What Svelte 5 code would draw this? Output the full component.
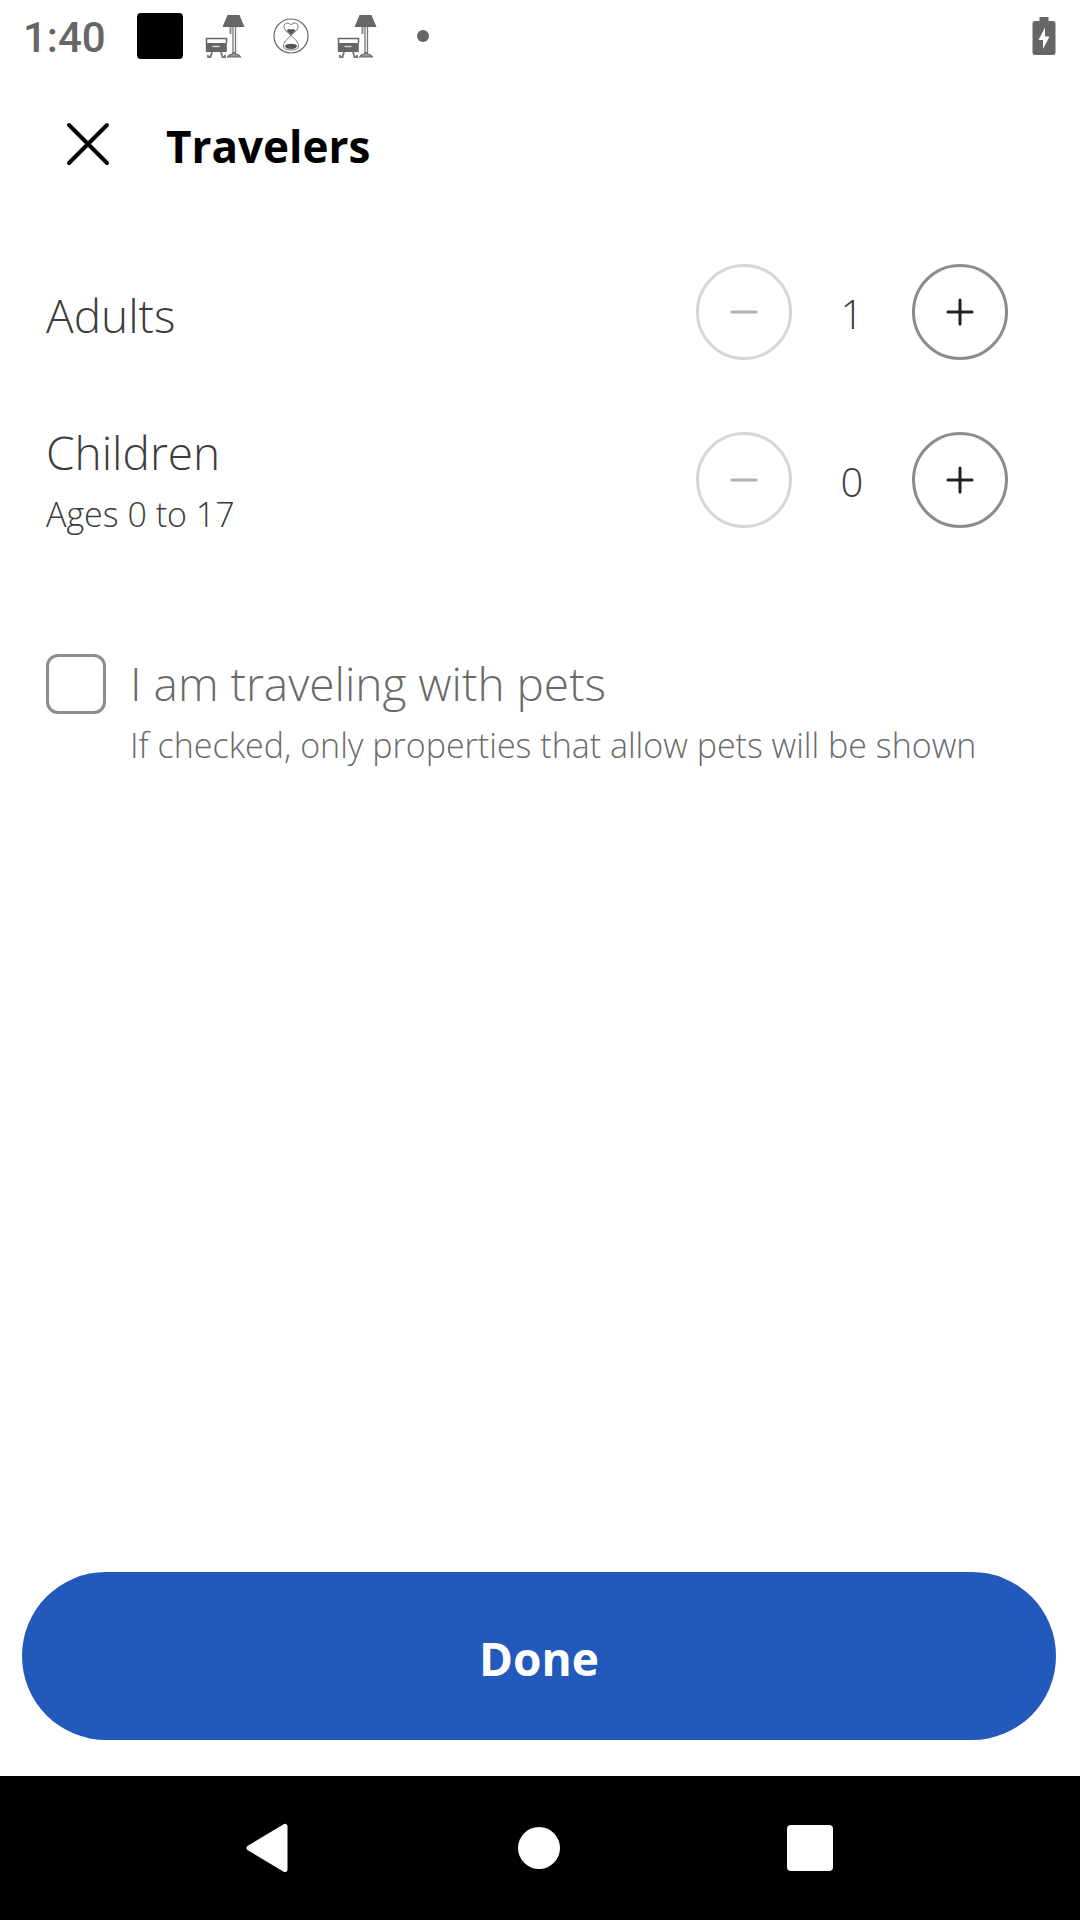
<script>
  let rows = $state([
    { id: 'adults', label: 'Adults', note: '', count: 1, min: 1 },
    { id: 'children', label: 'Children', note: 'Ages 0 to 17', count: 0, min: 0 },
  ]);
  let pets = $state(false);
</script>

{#snippet lamp()}
  <svg class="lamp" width="40" height="44" viewBox="0 0 40 44" aria-hidden="true">
    <path d="M22.500 1h12l5 12H17.500z" fill="#666" />
    <path d="M25.500 13v7" stroke="#888" stroke-width="2" />
    <path d="M28 13v26M30.500 13v26" stroke="#777" stroke-width="1.300" />
    <path d="M22.500 43q1-2 4.500-3l2-1.500 2 1.500q3.500 1 4.500 3z" fill="#999" stroke="#666" stroke-width="1.200" />
    <path d="M1.500 29v-4.500h20V29" fill="none" stroke="#666" stroke-width="1.500" />
    <path d="M.8 29h21v9H.8z" fill="#666" />
    <path d="M7.500 32.500h7" stroke="#ddd" stroke-width="1.300" />
    <path d="M7 38l-1.500 5H3v-2M16 38l1.500 5H20v-2" fill="none" stroke="#777" stroke-width="1.800" />
  </svg>
{/snippet}

<div class="screen">
  <div class="status">
    <span class="time">1:40</span>
    <span class="block"></span>
    {@render lamp()}
    <svg class="glass" width="36" height="36" viewBox="0 0 36 36" aria-hidden="true">
      <circle cx="18" cy="18" r="17" fill="none" stroke="#666" stroke-width="1.200" />
      <path
        d="M18 17.500C14.500 14.500 11 12 11 8.500 11 4.500 16 4 18 7c2-3 7-2.500 7 1.500 0 3.500-3.500 6-7 9zm0 0c-4 3.500-7.500 7-7.500 10.500 0 3 3 4 7.500 4s7.500-1 7.500-4c0-3.500-3.500-7-7.500-10.500z"
        fill="none" stroke="#777" stroke-width="1" />
      <path d="M18 17l-4.500-4.500q2-2.500 4.500-1 2.500-1.500 4.500 1z" fill="#555" />
      <path d="M12 28.500q0-2 2-2.200 4-1 8 0 2 .2 2 2.200-1 2.500-6 2.500t-6-2.500z" fill="#555" />
    </svg>
    {@render lamp()}
    <span class="dot"></span>
    <svg class="battery" width="24" height="40" viewBox="0 0 24 40" aria-hidden="true">
      <path d="M7.500 1h9v4h4.500a2.500 2.500 0 0 1 2.500 2.500v29a2.500 2.500 0 0 1-2.500 2.500H3a2.500 2.500 0 0 1-2.500-2.500v-29A2.500 2.500 0 0 1 3 5h4.500z" fill="#666" />
      <path d="M13 11.500v9h4.500L11 33v-9H6.500z" fill="#fff" />
    </svg>
  </div>

  <header>
    <button class="close" aria-label="Close">
      <svg width="44" height="44" viewBox="0 0 44 44" aria-hidden="true">
        <path d="M3 3l38 38M41 3L3 41" stroke="#000" stroke-width="4" stroke-linecap="round" />
      </svg>
    </button>
    <h1>Travelers</h1>
  </header>

  <main>
    {#each rows as row (row.id)}
      <div class="row" role="group" aria-labelledby={row.id}>
        <div class="text">
          <div class="label" id={row.id}>{row.label}</div>
          {#if row.note}<div class="note">{row.note}</div>{/if}
        </div>
        <div class="stepper">
          <button class="round" aria-label={`Fewer ${row.label}`} disabled={row.count <= row.min} onclick={() => row.count--}>
            <svg width="28" height="28" viewBox="0 0 28 28" aria-hidden="true"><path d="M2 14h24" /></svg>
          </button>
          <output>{row.count}</output>
          <button class="round" aria-label={`More ${row.label}`} onclick={() => row.count++}>
            <svg width="28" height="28" viewBox="0 0 28 28" aria-hidden="true"><path d="M2 14h24M14 2v24" /></svg>
          </button>
        </div>
      </div>
    {/each}

    <div class="pets">
      <input type="checkbox" id="pets" bind:checked={pets} aria-describedby="pets-note" />
      <div>
        <label class="label" for="pets">I am traveling with pets</label>
        <div class="note" id="pets-note">If checked, only properties that allow pets will be shown</div>
      </div>
    </div>
  </main>

  <div class="action"><button class="done">Done</button></div>

  <nav>
    <button aria-label="Back">
      <svg width="48" height="52" viewBox="0 0 48 52" aria-hidden="true">
        <path d="M5 26L41 4.500v43z" fill="#fff" stroke="#fff" stroke-width="5" stroke-linejoin="round" />
      </svg>
    </button>
    <button aria-label="Home"><span class="home"></span></button>
    <button aria-label="Recent apps"><span class="recent"></span></button>
  </nav>
</div>

<style>
  :global(body) {
    margin: 0;
    background: #fff;
  }
  .screen {
    min-height: 100vh;
    display: flex;
    flex-direction: column;
    font-family: 'Open Sans', 'Noto Sans', sans-serif;
    color: #3c3c3c;
  }
  button {
    padding: 0;
    border: 0;
    background: none;
    font: inherit;
    display: grid;
    place-items: center;
    cursor: pointer;
  }
  svg {
    display: block;
  }
  .status {
    height: 72px;
    padding: 0 24px 0 23px;
    display: flex;
    align-items: center;
    color: #666;
  }
  .time {
    font: 500 42px/48px Roboto, sans-serif;
    padding-top: 4px;
    margin-right: 31px;
  }
  .block {
    width: 46px;
    height: 46px;
    border-radius: 4px;
    background: #000;
    margin-right: 22px;
  }
  .glass {
    margin: 0 28px;
  }
  .dot {
    width: 12px;
    height: 12px;
    border-radius: 50%;
    background: #666;
    margin-left: 40px;
  }
  .battery {
    margin-left: auto;
  }
  header {
    height: 144px;
    padding: 0 48px;
    display: flex;
    align-items: center;
    gap: 38px;
  }
  .close {
    width: 80px;
    height: 80px;
  }
  h1 {
    margin: 0;
    padding-top: 4px;
    font-size: 44px;
    line-height: 64px;
    font-weight: 700;
    color: #000;
  }
  main {
    flex: 1;
    padding: 12px 72px 24px 46px;
  }
  .row {
    min-height: 168px;
    display: flex;
    align-items: center;
    justify-content: space-between;
  }
  .text {
    padding-top: 6px;
  }
  .label {
    display: block;
    font-size: 46px;
    line-height: 62px;
    font-weight: 300;
  }
  .note {
    font-size: 34px;
    line-height: 62px;
    font-weight: 300;
  }
  .stepper {
    display: flex;
    align-items: center;
  }
  .round {
    width: 96px;
    height: 96px;
    border: 3px solid #8c8c8c;
    border-radius: 50%;
    color: #222;
  }
  .round path {
    stroke: currentColor;
    stroke-width: 3;
    stroke-linecap: round;
  }
  .round:disabled {
    border-color: #d6d6d6;
    color: #b2b2b2;
    cursor: default;
  }
  output {
    width: 120px;
    padding-top: 4px;
    text-align: center;
    font-size: 40px;
    line-height: 56px;
    font-weight: 300;
  }
  .pets {
    margin-top: 88px;
    display: flex;
    align-items: flex-start;
    gap: 24px;
    color: #6a6a6a;
  }
  input {
    appearance: none;
    flex: none;
    width: 60px;
    height: 60px;
    margin: 2px 0;
    border: 3px solid #8c8c8c;
    border-radius: 12px;
    background: #fff;
  }
  input:checked {
    background: #2459bc;
  }
  .action {
    padding: 0 24px 36px 22px;
  }
  .done {
    width: 100%;
    height: 168px;
    padding-top: 4px;
    border-radius: 84px;
    background: #2459bc;
    color: #fff;
    font-size: 46px;
    line-height: 64px;
    font-weight: 700;
  }
  nav {
    height: 144px;
    padding: 0 135px 0 133px;
    background: #000;
    display: grid;
    grid-template-columns: repeat(3, 1fr);
  }
  .home {
    width: 42px;
    height: 42px;
    border-radius: 50%;
    background: #fff;
  }
  .recent {
    width: 46px;
    height: 46px;
    border-radius: 4px;
    background: #fff;
  }
</style>
